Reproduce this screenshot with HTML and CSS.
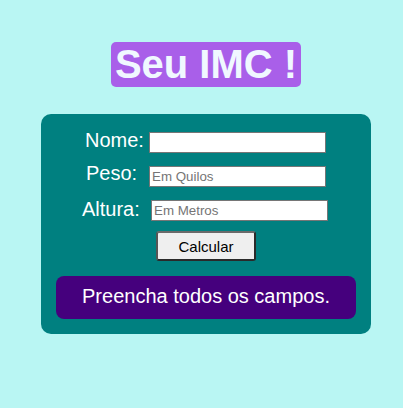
FILE: index.html
```html
<!DOCTYPE html>
<html lang="pt">
<head>
<meta charset="utf-8">
<title>Seu IMC</title>
<link rel="stylesheet" href="styles.css">
</head>
<body>
<main class="page">
  <h1 class="title">Seu IMC !</h1>
  <section class="card">
    <div class="row row-nome">
      <label class="lbl lbl-nome" for="nome">Nome:</label>
      <input class="field" id="nome" type="text">
    </div>
    <div class="row row-peso">
      <label class="lbl lbl-peso" for="peso">Peso:</label>
      <input class="field" id="peso" type="text" placeholder="Em Quilos">
    </div>
    <div class="row row-altura">
      <label class="lbl lbl-altura" for="altura">Altura:</label>
      <input class="field" id="altura" type="text" placeholder="Em Metros">
    </div>
    <button class="btn" type="button">Calcular</button>
    <div class="result">Preencha todos os campos.</div>
  </section>
</main>
</body>
</html>
```

FILE: styles.css
```css
html, body {
  margin: 0;
  padding: 0;
}
body {
  background: #b9f6f3;
  font-family: "Liberation Sans", Arial, sans-serif;
  width: 403px;
  height: 408px;
  overflow: hidden;
}
.page {
  display: flex;
  flex-direction: column;
  align-items: center;
  padding: 42px 0 0 9px;
}
.title {
  margin: 0;
  font-size: 40px;
  font-weight: bold;
  line-height: 45px;
  color: #f0f8ff;
  background: #a95fe9;
  padding: 0 4px;
  border-radius: 5px;
}
.card {
  margin-top: 27px;
  width: 330px;
  box-sizing: border-box;
  background: #008080;
  border-radius: 10px;
  padding: 18px 15px 15px;
  display: flex;
  flex-direction: column;
  align-items: center;
}
.row {
  align-self: stretch;
  display: flex;
  align-items: flex-start;
  height: 21px;
  margin-bottom: 13px;
}
.row-nome { padding-left: 29px; }
.row-peso { padding-left: 30px; }
.row-altura { padding-left: 26px; margin-bottom: 10px; }
.lbl {
  flex: none;
  color: #ffffff;
  font-size: 20px;
  line-height: 17px;
  white-space: nowrap;
}
.lbl-nome { width: 64px; }
.lbl-peso { width: 63px; margin-top: -1px; }
.lbl-altura { width: 69px; margin-top: 1px; }
.field {
  flex: none;
  width: 177px;
  height: 21px;
  box-sizing: border-box;
  border: 1px solid #767676;
  padding: 0 2px;
  margin: 0;
  background: #ffffff;
  font-family: "Liberation Sans", Arial, sans-serif;
  font-size: 13.33px;
  color: #000;
  outline: none;
}
.field::placeholder {
  color: #757575;
}
.btn {
  width: 100px;
  height: 30px;
  box-sizing: border-box;
  background: #efefef;
  border: 2px solid #2a2a2a;
  border-top-color: #6a6a6a;
  border-left-color: #555;
  border-radius: 3px;
  font-family: "Liberation Sans", Arial, sans-serif;
  font-size: 15px;
  color: #000;
  padding: 0;
  margin: 0;
}
.result {
  margin-top: 15px;
  width: 300px;
  box-sizing: border-box;
  background: #45007d;
  color: #ffffff;
  border-radius: 8px;
  font-size: 20px;
  line-height: 23px;
  padding: 9px 0 11px;
  text-align: center;
}
```
